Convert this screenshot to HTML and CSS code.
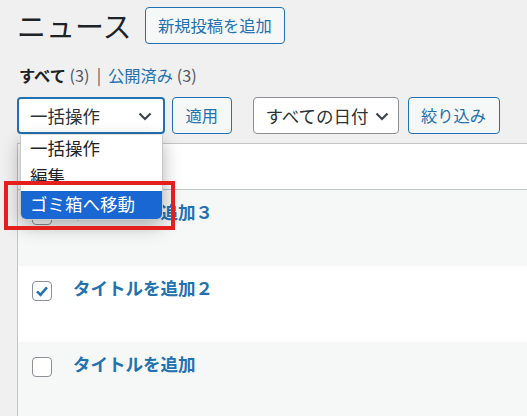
FILE: index.html
```html
<!DOCTYPE html>
<html>
<head>
    <title>ニュース</title>
    <link rel="stylesheet" href="styles.css">
</head>
<body>
    <div class="wrap">
        <div class="page-header">
            <h1>ニュース</h1>
            <a class="button" href="#">新規投稿を追加</a>
        </div>

        <ul class="subsubsub">
            <li><b>すべて</b> <span class="count">(3)</span></li>
            <li class="sep">|</li>
            <li><a href="#">公開済み</a> <span class="count">(3)</span></li>
        </ul>

        <div class="tablenav">
            <div class="select-wrap">
                <div class="select focused">
                    <span>一括操作</span>
                    <svg class="chevron" viewBox="0 0 20 20"><path d="M4.5 7.5l5.5 5.5 5.5-5.5"/></svg>
                </div>
                <!-- open list of the bulk actions select -->
                <ul class="dropdown">
                    <li>一括操作</li>
                    <li>編集</li>
                    <li class="selected">ゴミ箱へ移動</li>
                </ul>
                <div class="highlight"></div>
            </div>
            <a class="button" href="#">適用</a>
            <div class="select date">
                <span>すべての日付</span>
                <svg class="chevron" viewBox="0 0 20 20"><path d="M4.5 7.5l5.5 5.5 5.5-5.5"/></svg>
            </div>
            <a class="button" href="#">絞り込み</a>
        </div>

        <div class="post-table">
            <div class="row head">
                <span class="checkbox"></span>
            </div>
            <div class="row alt">
                <span class="checkbox"></span>
                <a class="row-title" href="#">タイトルを追加３</a>
            </div>
            <div class="row">
                <span class="checkbox checked">
                    <svg viewBox="0 0 20 20"><path d="M4.5 10.5l3.8 3.8 7.2-8.3"/></svg>
                </span>
                <a class="row-title" href="#">タイトルを追加２</a>
            </div>
            <div class="row alt last">
                <span class="checkbox"></span>
                <a class="row-title" href="#">タイトルを追加</a>
            </div>
        </div>
    </div>
</body>
</html>
```

FILE: styles.css
```css
body {
    margin: 0;
    background: #f0f0f1;
    color: #1d2327;
    font-family: "Noto Sans CJK JP", "Noto Sans", sans-serif;
    overflow: hidden;
}

a {
    color: #2271b1;
    text-decoration: none;
}

.wrap {
    padding: 7px 0 0 17px;
}

.page-header {
    display: flex;
    align-items: center;
    gap: 13px;
    height: 37px;
}

h1 {
    margin: 0;
    font-size: 29px;
    font-weight: 400;
    line-height: 37px;
}

.button {
    display: flex;
    align-items: center;
    height: 37px;
    box-sizing: border-box;
    padding: 0 12.5px;
    border: 1px solid #2271b1;
    border-radius: 4px;
    background: #f6f7f7;
    font-size: 16.25px;
    line-height: 1;
}

.subsubsub {
    display: flex;
    gap: 7px;
    margin: 18px 0 0 2px;
    padding: 0;
    list-style: none;
    font-size: 16.25px;
    line-height: 26px;
}

.subsubsub .count,
.subsubsub .sep {
    color: #50575e;
}

.tablenav {
    display: flex;
    align-items: center;
    margin-top: 9px;
    height: 37px;
}

.tablenav > .button {
    margin-left: 7px;
}

.tablenav > .date {
    margin-left: 21px;
}

.select-wrap {
    position: relative;
}

.select {
    display: flex;
    align-items: center;
    justify-content: space-between;
    box-sizing: border-box;
    width: 148px;
    height: 37px;
    padding: 0 8px 0 12px;
    border: 1px solid #8c8f94;
    border-radius: 4px;
    background: #fff;
    font-size: 17.5px;
    line-height: 1;
    color: #2c3338;
}

.select.focused {
    border: 2px solid #2271b1;
    padding-left: 11px;
}

.select.date {
    width: 146px;
    padding-right: 6px;
}

.select.date + .button {
    margin-left: 9px;
}

.chevron {
    width: 20px;
    height: 20px;
    fill: none;
    stroke: #3c434a;
    stroke-width: 2.2;
}

.dropdown {
    position: absolute;
    top: 38px;
    left: 3px;
    z-index: 5;
    width: 143px;
    margin: 0;
    padding: 0;
    list-style: none;
    background: #fff;
    border: 1px solid #c9c9c9;
    border-top: none;
    border-radius: 0 0 6px 6px;
    box-sizing: border-box;
    box-shadow: 0 6px 18px rgba(0, 0, 0, 0.3);
    overflow: hidden;
    font-size: 17.5px;
}

.dropdown li {
    height: 28px;
    padding-left: 9px;
    line-height: 26px;
}

.dropdown li.selected {
    background: #1967d2;
    color: #fff;
}

.highlight {
    position: absolute;
    top: 84px;
    left: -13px;
    z-index: 6;
    width: 171px;
    height: 49px;
    box-sizing: border-box;
    border: 4.5px solid #e3201c;
}

.post-table {
    margin-top: 9px;
    border: 1px solid #c3c4c7;
    border-right: none;
    border-bottom: none;
    background: #fff;
}

.row {
    display: flex;
    align-items: flex-start;
    gap: 21px;
    height: 76px;
    padding-left: 14px;
}

.row.head {
    height: 45px;
    border-bottom: 1px solid #c3c4c7;
}

.row.alt {
    background: #f6f7f7;
}

.row.last {
    height: 74px;
}

.checkbox {
    display: block;
    width: 20px;
    height: 20px;
    margin-top: 15px;
    box-sizing: border-box;
    border: 1px solid #8c8f94;
    border-radius: 4px;
    background: #fff;
}

.row.head .checkbox {
    margin-top: 12px;
}

.checkbox svg {
    display: block;
    width: 18px;
    height: 18px;
    fill: none;
    stroke: #2271b1;
    stroke-width: 2.8;
}

.row-title {
    margin-top: 11px;
    font-size: 17.5px;
    font-weight: 700;
    line-height: 22px;
}
```
